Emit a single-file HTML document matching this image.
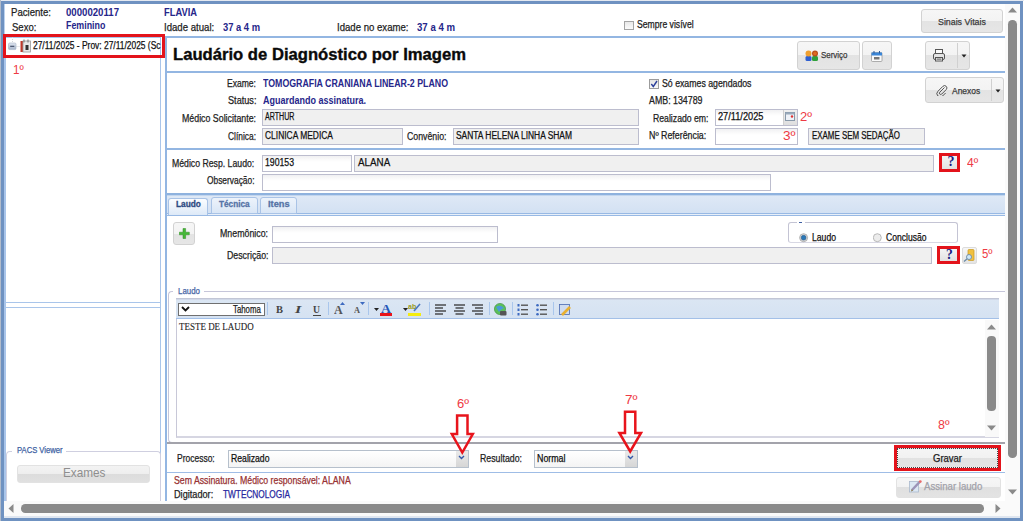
<!DOCTYPE html>
<html><head><meta charset="utf-8"><style>
html,body{margin:0;padding:0;width:1024px;height:521px;overflow:hidden;background:#ffffff;}
body>div{position:absolute;box-sizing:border-box;}
svg{position:absolute;}
</style></head><body>
<div style="left:0px;top:0px;width:1024px;height:1px;background:#e4e9f1"></div>
<div style="left:0px;top:0px;width:1px;height:521px;background:#b2bccb"></div>
<div style="left:1px;top:1px;width:1022px;height:3px;background:#6f92c1"></div>
<div style="left:1px;top:1px;width:3px;height:520px;background:#6f92c1"></div>
<div style="left:1020px;top:1px;width:3px;height:520px;background:#6f92c1"></div>
<div style="left:1px;top:518px;width:1022px;height:3px;background:#6f92c1"></div>
<div style="left:4px;top:516px;width:1016px;height:2px;background:#dfe6f0"></div>
<div style="left:4px;top:4px;width:1px;height:497px;background:#bcd2ee"></div>
<div style="left:11px;top:7px;font:11px 'Liberation Sans', sans-serif;line-height:11px;color:#1e1e1e;white-space:pre;transform:scaleX(0.8719);transform-origin:0 0;-webkit-text-stroke:0.25px currentColor;">Paciente:</div>
<div style="left:65.6px;top:7px;font:bold 10.5px 'Liberation Sans', sans-serif;line-height:10.5px;color:#26268a;white-space:pre;transform:scaleX(0.9165);transform-origin:0 0;">0000020117</div>
<div style="left:12px;top:22px;font:11px 'Liberation Sans', sans-serif;line-height:11px;color:#1e1e1e;white-space:pre;transform:scaleX(0.8671);transform-origin:0 0;-webkit-text-stroke:0.25px currentColor;">Sexo:</div>
<div style="left:65.6px;top:20px;font:bold 10.5px 'Liberation Sans', sans-serif;line-height:10.5px;color:#26268a;white-space:pre;transform:scaleX(0.8442);transform-origin:0 0;">Feminino</div>
<div style="left:164px;top:7px;font:bold 10.5px 'Liberation Sans', sans-serif;line-height:10.5px;color:#26268a;white-space:pre;transform:scaleX(0.8885);transform-origin:0 0;">FLAVIA</div>
<div style="left:164px;top:22px;font:11px 'Liberation Sans', sans-serif;line-height:11px;color:#1e1e1e;white-space:pre;transform:scaleX(0.8739);transform-origin:0 0;-webkit-text-stroke:0.25px currentColor;">Idade atual:</div>
<div style="left:223px;top:22px;font:bold 10.5px 'Liberation Sans', sans-serif;line-height:10.5px;color:#26268a;white-space:pre;transform:scaleX(0.8926);transform-origin:0 0;">37 a 4 m</div>
<div style="left:337px;top:22px;font:11px 'Liberation Sans', sans-serif;line-height:11px;color:#1e1e1e;white-space:pre;transform:scaleX(0.8724);transform-origin:0 0;-webkit-text-stroke:0.25px currentColor;">Idade no exame:</div>
<div style="left:416.5px;top:22px;font:bold 10.5px 'Liberation Sans', sans-serif;line-height:10.5px;color:#26268a;white-space:pre;transform:scaleX(0.9167);transform-origin:0 0;">37 a 4 m</div>
<div style="left:624px;top:21px;width:10px;height:9px;border:1px solid #a4a4a4;background:linear-gradient(#e8e8e8,#fbfbfb)"></div>
<div style="left:636.8px;top:20px;font:10px 'Liberation Sans', sans-serif;line-height:10px;color:#222;white-space:pre;transform:scaleX(0.8631);transform-origin:0 0;-webkit-text-stroke:0.25px currentColor;">Sempre visível</div>
<div style="left:921px;top:9px;width:82px;height:24px;background:linear-gradient(#f6f6f6 0,#f3f3f3 50%,#e3e3e3 50%,#e6e6e6 100%);border:1px solid #d2d2d2;border-radius:3px;"></div>
<div style="left:937.8px;top:17px;font:9.5px 'Liberation Sans', sans-serif;line-height:9.5px;color:#3a3a3a;white-space:pre;transform:scaleX(0.9287);transform-origin:0 0;-webkit-text-stroke:0.25px currentColor;">Sinais Vitais</div>
<div style="left:4px;top:37px;width:2px;height:464px;background:#a9c5ea"></div>
<div style="left:4px;top:37px;width:157px;height:1px;background:#a9c5ea"></div>
<div style="left:160px;top:37px;width:1px;height:464px;background:#a9c5ea"></div>
<svg style="left:8px;top:37px" width="14" height="14"><defs><linearGradient id="eg" x1="0" y1="0" x2="0" y2="1"><stop offset="0" stop-color="#e2e8f2"/><stop offset="1" stop-color="#a4b2c8"/></linearGradient></defs><line x1="4.5" y1="0" x2="4.5" y2="5.5" stroke="#d0d4da" stroke-dasharray="1,1"/><line x1="8.5" y1="9.5" x2="12" y2="9.5" stroke="#d0d4da" stroke-dasharray="1,1"/><rect x="0.5" y="6" width="7.5" height="6.6" rx="1.2" fill="url(#eg)" stroke="#a6b2c4" stroke-width="0.6"/><line x1="2.2" y1="9.3" x2="6.3" y2="9.3" stroke="#3a4660" stroke-width="1.1"/></svg>
<svg style="left:20px;top:39px" width="11" height="14"><rect x="0.5" y="2" width="3" height="11" fill="#c0392b"/><rect x="3" y="2" width="7.5" height="11" fill="#e8e8e8" stroke="#9a9a9a" stroke-width="0.8"/><rect x="3.5" y="0.5" width="1" height="3" fill="#777"/><rect x="7.5" y="0.5" width="1" height="3" fill="#777"/><rect x="5.5" y="6" width="3" height="5" fill="#333"/></svg>
<div style="left:32.5px;top:41px;font:10px 'Liberation Sans', sans-serif;line-height:10px;color:#111;white-space:pre;transform:scaleX(0.8421);transform-origin:0 0;-webkit-text-stroke:0.25px currentColor;">27/11/2025 - Prov: 27/11/2025 (Sc</div>
<div style="left:3px;top:34px;width:162px;height:24px;border:3px solid #e3131b"></div>
<div style="left:13px;top:64px;font:12px 'Liberation Sans', sans-serif;line-height:12px;color:#ee3a44;white-space:pre;transform:scaleX(0.9718);transform-origin:0 0;">1º</div>
<div style="left:5px;top:302px;width:156px;height:1px;background:#a9c5ea"></div>
<div style="left:5px;top:307px;width:156px;height:1px;background:#a9c5ea"></div>
<div style="left:6px;top:451px;width:155px;height:60px;border:1px solid #cfcfe0;border-radius:4px;border-bottom:none"></div>
<div style="left:12px;top:446px;width:54px;height:10px;background:#fff"></div>
<div style="left:16.9px;top:446px;font:9px 'Liberation Sans', sans-serif;line-height:9px;color:#3d5fa3;white-space:pre;transform:scaleX(0.8491);transform-origin:0 0;-webkit-text-stroke:0.25px currentColor;">PACS Viewer</div>
<div style="left:17px;top:465px;width:133px;height:18px;background:linear-gradient(#f3f3f3 0,#eeeeee 50%,#dcdcdc 50%,#e0e0e0 100%);border:1px solid #e2e2e2;border-radius:3px"></div>
<div style="left:62.5px;top:466px;font:13.5px 'Liberation Sans', sans-serif;line-height:13.5px;color:#8e8e8e;white-space:pre;transform:scaleX(0.8712);transform-origin:0 0;">Exames</div>
<div style="left:165px;top:36px;width:2px;height:465px;background:#93b6e2"></div>
<div style="left:165px;top:36px;width:840px;height:2px;background:#93b6e2"></div>
<div style="left:173px;top:46px;font:bold 17px 'Liberation Sans', sans-serif;line-height:17px;color:#0a0a0a;white-space:pre;transform:scaleX(0.9785);transform-origin:0 0;-webkit-text-stroke:0.35px currentColor;">Laudário de Diagnóstico por Imagem</div>
<div style="left:165px;top:71px;width:840px;height:2px;background:#93b6e2"></div>
<div style="left:797px;top:41px;width:63px;height:29px;background:linear-gradient(#f6f6f6 0,#f3f3f3 50%,#e3e3e3 50%,#e6e6e6 100%);border:1px solid #d2d2d2;border-radius:3px;"></div>
<svg style="left:805px;top:50px" width="14" height="12"><rect x="0.5" y="6" width="6" height="5" rx="1.5" fill="#2f5fd0"/><rect x="7" y="6" width="6" height="5" rx="1.5" fill="#2ea03a"/><circle cx="3.5" cy="3.5" r="3" fill="#f0a030"/><circle cx="10" cy="3.5" r="3" fill="#b8501c"/><circle cx="10" cy="3.5" r="1.8" fill="#e06a20"/></svg>
<div style="left:821px;top:49.5px;font:9.5px 'Liberation Sans', sans-serif;line-height:9.5px;color:#3a3a3a;white-space:pre;transform:scaleX(0.8363);transform-origin:0 0;-webkit-text-stroke:0.25px currentColor;">Serviço</div>
<div style="left:862px;top:41px;width:30px;height:29px;background:linear-gradient(#f6f6f6 0,#f3f3f3 50%,#e3e3e3 50%,#e6e6e6 100%);border:1px solid #d2d2d2;border-radius:3px;"></div>
<svg style="left:871px;top:51px" width="12" height="11"><rect x="0.5" y="1.5" width="10.5" height="9" rx="1" fill="#fafafa" stroke="#9a9a9a" stroke-width="0.8"/><rect x="0.5" y="1.5" width="10.5" height="3" fill="#3a86d8"/><rect x="2.5" y="0" width="1" height="2.5" fill="#2a5a9a"/><rect x="8" y="0" width="1" height="2.5" fill="#2a5a9a"/><rect x="3" y="6" width="5.5" height="2.5" fill="#777"/></svg>
<div style="left:925px;top:41px;width:45px;height:29px;background:linear-gradient(#f6f6f6 0,#f3f3f3 50%,#e3e3e3 50%,#e6e6e6 100%);border:1px solid #d2d2d2;border-radius:3px;"></div>
<div style="left:957px;top:43px;width:1px;height:25px;background:#d0d0d0"></div>
<svg style="left:933px;top:49px" width="12" height="13"><rect x="2.5" y="0.5" width="7" height="4" fill="#fafafa" stroke="#555"/><rect x="0.5" y="4.5" width="11" height="6" rx="1.5" fill="#e4e4e4" stroke="#555"/><rect x="2.5" y="8.5" width="7" height="3.5" fill="#fafafa" stroke="#555"/><rect x="3.5" y="9.5" width="5" height="1.2" fill="#666"/></svg>
<svg style="left:961px;top:54px" width="6" height="4"><polygon points="0.5,0.5 5.5,0.5 3,3.5" fill="#222"/></svg>
<div style="left:925px;top:77px;width:79px;height:26px;background:linear-gradient(#f6f6f6 0,#f3f3f3 50%,#e3e3e3 50%,#e6e6e6 100%);border:1px solid #d2d2d2;border-radius:3px;"></div>
<div style="left:991px;top:79px;width:1px;height:22px;background:#d0d0d0"></div>
<svg style="left:936px;top:85px" width="12" height="11"><path d="M8.5,2.5 L3.8,7.2 a1.3,1.3 0 0 0 1.9,1.9 L10.2,4.6 a2.3,2.3 0 0 0 -3.3,-3.3 L1.9,6.3 a3.3,3.3 0 0 0 4.7,4.7 L9.6,8" fill="none" stroke="#555" stroke-width="1"/></svg>
<div style="left:951.6px;top:85.5px;font:9.5px 'Liberation Sans', sans-serif;line-height:9.5px;color:#3a3a3a;white-space:pre;transform:scaleX(0.8899);transform-origin:0 0;-webkit-text-stroke:0.25px currentColor;">Anexos</div>
<svg style="left:995px;top:89px" width="6" height="4"><polygon points="0.5,0.5 5.5,0.5 3,3.5" fill="#222"/></svg>
<div style="left:227px;top:79px;font:10px 'Liberation Sans', sans-serif;line-height:10px;color:#1e1e1e;white-space:pre;transform:scaleX(0.8553);transform-origin:0 0;-webkit-text-stroke:0.25px currentColor;">Exame:</div>
<div style="left:262.7px;top:79px;font:bold 10px 'Liberation Sans', sans-serif;line-height:10px;color:#26268a;white-space:pre;transform:scaleX(0.8802);transform-origin:0 0;">TOMOGRAFIA CRANIANA LINEAR-2 PLANO</div>
<div style="left:227.5px;top:96px;font:10px 'Liberation Sans', sans-serif;line-height:10px;color:#1e1e1e;white-space:pre;transform:scaleX(0.9152);transform-origin:0 0;-webkit-text-stroke:0.25px currentColor;">Status:</div>
<div style="left:262.7px;top:96px;font:bold 10px 'Liberation Sans', sans-serif;line-height:10px;color:#26268a;white-space:pre;transform:scaleX(0.8998);transform-origin:0 0;">Aguardando assinatura.</div>
<div style="left:182.1px;top:114px;font:10px 'Liberation Sans', sans-serif;line-height:10px;color:#1e1e1e;white-space:pre;transform:scaleX(0.8816);transform-origin:0 0;-webkit-text-stroke:0.25px currentColor;">Médico Solicitante:</div>
<div style="left:262px;top:109px;width:377px;height:17px;background:#f0f0f0;border:1px solid #bcbdce"></div>
<div style="left:265.3px;top:112px;font:10px 'Liberation Sans', sans-serif;line-height:10px;color:#111;white-space:pre;transform:scaleX(0.7111);transform-origin:0 0;-webkit-text-stroke:0.25px currentColor;">ARTHUR</div>
<div style="left:228px;top:132px;font:10px 'Liberation Sans', sans-serif;line-height:10px;color:#1e1e1e;white-space:pre;transform:scaleX(0.8393);transform-origin:0 0;-webkit-text-stroke:0.25px currentColor;">Clínica:</div>
<div style="left:262px;top:128px;width:141px;height:17px;background:#f0f0f0;border:1px solid #bcbdce"></div>
<div style="left:265.3px;top:131px;font:10px 'Liberation Sans', sans-serif;line-height:10px;color:#111;white-space:pre;transform:scaleX(0.8439);transform-origin:0 0;-webkit-text-stroke:0.25px currentColor;">CLINICA MEDICA</div>
<div style="left:407px;top:132px;font:10px 'Liberation Sans', sans-serif;line-height:10px;color:#1e1e1e;white-space:pre;transform:scaleX(0.8772);transform-origin:0 0;-webkit-text-stroke:0.25px currentColor;">Convênio:</div>
<div style="left:453px;top:128px;width:186px;height:17px;background:#f0f0f0;border:1px solid #bcbdce"></div>
<div style="left:456px;top:131px;font:10px 'Liberation Sans', sans-serif;line-height:10px;color:#111;white-space:pre;transform:scaleX(0.8428);transform-origin:0 0;-webkit-text-stroke:0.25px currentColor;">SANTA HELENA LINHA SHAM</div>
<div style="left:649px;top:79px;width:10px;height:10px;border:1px solid #9c9c9c;background:linear-gradient(#e4e4e4,#f8f8f8)"></div>
<svg style="left:650px;top:80px" width="8" height="8"><polyline points="1.3,4 3.3,6.5 7,1" fill="none" stroke="#2b3f9a" stroke-width="1.4"/></svg>
<div style="left:662px;top:79px;font:10px 'Liberation Sans', sans-serif;line-height:10px;color:#222;white-space:pre;transform:scaleX(0.8749);transform-origin:0 0;-webkit-text-stroke:0.25px currentColor;">Só exames agendados</div>
<div style="left:649px;top:96px;font:10px 'Liberation Sans', sans-serif;line-height:10px;color:#222;white-space:pre;transform:scaleX(0.8827);transform-origin:0 0;-webkit-text-stroke:0.25px currentColor;">AMB: 134789</div>
<div style="left:652.5px;top:114px;font:10px 'Liberation Sans', sans-serif;line-height:10px;color:#222;white-space:pre;transform:scaleX(0.8682);transform-origin:0 0;-webkit-text-stroke:0.25px currentColor;">Realizado em:</div>
<div style="left:715px;top:109px;width:83px;height:17px;background:linear-gradient(#f0f0f2,#fbfbfb 4px,#fff 6px);border:1px solid #bcbdce"></div>
<div style="left:783px;top:110px;width:14px;height:15px;background:linear-gradient(#f0f0f0,#dedede);border-left:1px solid #d0d0d0"></div>
<svg style="left:785px;top:112px" width="10" height="10"><rect x="0.5" y="0.5" width="9" height="8" fill="#eef2f8" stroke="#8899aa"/><rect x="0.5" y="0.5" width="9" height="2" fill="#9ab"/><circle cx="7" cy="4.5" r="1.2" fill="#d33"/></svg>
<div style="left:718px;top:112px;font:10px 'Liberation Sans', sans-serif;line-height:10px;color:#111;white-space:pre;transform:scaleX(0.9207);transform-origin:0 0;-webkit-text-stroke:0.25px currentColor;">27/11/2025</div>
<div style="left:800px;top:111px;font:12px 'Liberation Sans', sans-serif;line-height:12px;color:#ee3a44;white-space:pre;transform:scaleX(1.0847);transform-origin:0 0;">2º</div>
<div style="left:648.75px;top:131px;font:10px 'Liberation Sans', sans-serif;line-height:10px;color:#222;white-space:pre;transform:scaleX(0.8835);transform-origin:0 0;-webkit-text-stroke:0.25px currentColor;">Nº Referência:</div>
<div style="left:715px;top:128px;width:83px;height:17px;background:linear-gradient(#f0f0f2,#fbfbfb 4px,#fff 6px);border:1px solid #bcbdce"></div>
<div style="left:782.5px;top:130px;font:12px 'Liberation Sans', sans-serif;line-height:12px;color:#ee3a44;white-space:pre;transform:scaleX(1.1299);transform-origin:0 0;">3º</div>
<div style="left:808px;top:128px;width:117px;height:17px;background:#f0f0f0;border:1px solid #bcbdce"></div>
<div style="left:811.5px;top:131px;font:10px 'Liberation Sans', sans-serif;line-height:10px;color:#111;white-space:pre;transform:scaleX(0.7918);transform-origin:0 0;-webkit-text-stroke:0.25px currentColor;">EXAME SEM SEDAÇÃO</div>
<div style="left:165px;top:148px;width:840px;height:2px;background:#93b6e2"></div>
<div style="left:171.75px;top:159px;font:10px 'Liberation Sans', sans-serif;line-height:10px;color:#1e1e1e;white-space:pre;transform:scaleX(0.8702);transform-origin:0 0;-webkit-text-stroke:0.25px currentColor;">Médico Resp. Laudo:</div>
<div style="left:262px;top:155px;width:90px;height:17px;background:linear-gradient(#f0f0f2,#fbfbfb 4px,#fff 6px);border:1px solid #bcbdce"></div>
<div style="left:265.3px;top:158px;font:10px 'Liberation Sans', sans-serif;line-height:10px;color:#111;white-space:pre;transform:scaleX(0.8689);transform-origin:0 0;-webkit-text-stroke:0.25px currentColor;">190153</div>
<div style="left:354px;top:155px;width:580px;height:17px;background:#f0f0f0;border:1px solid #bcbdce"></div>
<div style="left:357.8px;top:157px;font:11px 'Liberation Sans', sans-serif;line-height:11px;color:#111;white-space:pre;transform:scaleX(0.8925);transform-origin:0 0;-webkit-text-stroke:0.25px currentColor;">ALANA</div>
<div style="left:939px;top:153px;width:21px;height:19px;border:3px solid #e3131b;background:linear-gradient(#f4f4f4,#e2e2e2)"></div>
<div style="left:947.4px;top:155px;font:bold 14px 'Liberation Serif', serif;line-height:14px;color:#1a1a80;white-space:pre;transform:scaleX(1.0000);transform-origin:0 0;">?</div>
<div style="left:966.6px;top:157px;font:12px 'Liberation Sans', sans-serif;line-height:12px;color:#ee3a44;white-space:pre;transform:scaleX(1.0124);transform-origin:0 0;">4º</div>
<div style="left:206.75px;top:176px;font:10px 'Liberation Sans', sans-serif;line-height:10px;color:#1e1e1e;white-space:pre;transform:scaleX(0.8377);transform-origin:0 0;-webkit-text-stroke:0.25px currentColor;">Observação:</div>
<div style="left:262px;top:174px;width:509px;height:17px;background:linear-gradient(#f0f0f2,#fbfbfb 4px,#fff 6px);border:1px solid #bcbdce"></div>
<div style="left:167px;top:193px;width:838px;height:2px;background:#8eb2de"></div>
<div style="left:167px;top:195px;width:838px;height:18px;background:linear-gradient(#dfe9f6,#d3e1f3)"></div>
<div style="left:167px;top:195px;width:838px;height:1px;background:#c2d6ef"></div>
<div style="left:167px;top:213px;width:838px;height:1px;background:#98b9e4"></div>
<div style="left:167px;top:214px;width:838px;height:1px;background:#e8f0fa"></div>
<div style="left:167px;top:215px;width:838px;height:1px;background:#98b9e4"></div>
<div style="left:168px;top:198px;width:40px;height:17px;background:linear-gradient(#fbfdff,#dde9f7);border:1px solid #a9c3e6;border-bottom:none;border-radius:3px 3px 0 0"></div>
<div style="left:211px;top:197px;width:47px;height:17px;background:linear-gradient(#edf3fb,#d9e6f6);border:1px solid #a9c3e6;border-radius:3px 3px 0 0"></div>
<div style="left:260px;top:197px;width:37px;height:17px;background:linear-gradient(#edf3fb,#d9e6f6);border:1px solid #a9c3e6;border-radius:3px 3px 0 0"></div>
<div style="left:176.2px;top:200px;font:bold 9px 'Liberation Sans', sans-serif;line-height:9px;color:#2c4a82;white-space:pre;transform:scaleX(0.9222);transform-origin:0 0;-webkit-text-stroke:0.3px currentColor;">Laudo</div>
<div style="left:219.3px;top:200px;font:bold 9px 'Liberation Sans', sans-serif;line-height:9px;color:#5573a6;white-space:pre;transform:scaleX(0.9156);transform-origin:0 0;-webkit-text-stroke:0.3px currentColor;">Técnica</div>
<div style="left:268px;top:200px;font:bold 9px 'Liberation Sans', sans-serif;line-height:9px;color:#5573a6;white-space:pre;transform:scaleX(1.0278);transform-origin:0 0;-webkit-text-stroke:0.3px currentColor;">Itens</div>
<div style="left:173px;top:222px;width:22px;height:23px;background:linear-gradient(#f6f6f6 0,#f3f3f3 50%,#e3e3e3 50%,#e6e6e6 100%);border:1px solid #d2d2d2;border-radius:3px;"></div>
<svg style="left:179px;top:228px" width="11" height="11"><path d="M4,0.5 h2.6 v3.7 h3.7 v2.6 h-3.7 v3.7 h-2.6 v-3.7 h-3.7 v-2.6 h3.7 z" fill="#46b838" stroke="#2f8a22" stroke-width="0.5"/></svg>
<div style="left:220px;top:229px;font:10px 'Liberation Sans', sans-serif;line-height:10px;color:#1e1e1e;white-space:pre;transform:scaleX(0.8812);transform-origin:0 0;-webkit-text-stroke:0.25px currentColor;">Mnemônico:</div>
<div style="left:272px;top:226px;width:226px;height:17px;background:linear-gradient(#f0f0f2,#fbfbfb 4px,#fff 6px);border:1px solid #bcbdce"></div>
<div style="left:226.75px;top:251px;font:10px 'Liberation Sans', sans-serif;line-height:10px;color:#1e1e1e;white-space:pre;transform:scaleX(0.8783);transform-origin:0 0;-webkit-text-stroke:0.25px currentColor;">Descrição:</div>
<div style="left:272px;top:247px;width:660px;height:17px;background:#f0f0f0;border:1px solid #bcbdce"></div>
<div style="left:788px;top:222px;width:170px;height:21px;border:1px solid #c4c4d4;border-radius:3px;border-bottom-color:#d8d8e4"></div>
<div style="left:797px;top:220px;width:8px;height:4px;background:#fff"></div>
<div style="left:799px;top:222px;width:3px;height:1px;background:#3d5fa3"></div>
<svg style="left:799px;top:233px" width="10" height="10"><circle cx="4.6" cy="4.7" r="4" fill="#dcdcdc" stroke="#9a9a9a" stroke-width="0.7"/><circle cx="4.6" cy="4.7" r="2.4" fill="#2a78b8" stroke="#1a4a78" stroke-width="0.5"/></svg>
<div style="left:812px;top:233px;font:10px 'Liberation Sans', sans-serif;line-height:10px;color:#111;white-space:pre;transform:scaleX(0.8629);transform-origin:0 0;-webkit-text-stroke:0.25px currentColor;">Laudo</div>
<svg style="left:873px;top:233px" width="10" height="10"><circle cx="4.3" cy="4.7" r="4" fill="#ececec" stroke="#a0a0a0" stroke-width="0.7"/></svg>
<div style="left:885.5px;top:233px;font:10px 'Liberation Sans', sans-serif;line-height:10px;color:#111;white-space:pre;transform:scaleX(0.8569);transform-origin:0 0;-webkit-text-stroke:0.25px currentColor;">Conclusão</div>
<div style="left:937px;top:246px;width:23px;height:18px;border:3px solid #e3131b;background:linear-gradient(#f4f4f4,#e2e2e2)"></div>
<div style="left:945.6px;top:248px;font:bold 14px 'Liberation Serif', serif;line-height:14px;color:#1a1a80;white-space:pre;transform:scaleX(0.9714);transform-origin:0 0;">?</div>
<div style="left:962px;top:247px;width:15px;height:17px;background:linear-gradient(#f6f6f6,#e4e4e4);border:1px solid #dcdcdc;border-radius:2px"></div>
<svg style="left:963px;top:249px" width="13" height="13"><rect x="5" y="0.5" width="6" height="11" rx="1" fill="#f0c040" stroke="#c89a20" stroke-width="0.7"/><circle cx="6" cy="8" r="2.5" fill="#cfe8f8" stroke="#6a8aa8" stroke-width="0.9"/><line x1="4.2" y1="9.8" x2="1" y2="12.5" stroke="#6a8aa8" stroke-width="1.3"/></svg>
<div style="left:982px;top:248px;font:12px 'Liberation Sans', sans-serif;line-height:12px;color:#ee3a44;white-space:pre;transform:scaleX(0.9492);transform-origin:0 0;">5º</div>
<div style="left:168px;top:291px;width:837px;height:152px;border:1px solid #c6c6da;border-right:none;border-radius:4px 0 0 4px"></div>
<div style="left:173px;top:286px;width:31px;height:9px;background:#fff"></div>
<div style="left:177.8px;top:287px;font:9px 'Liberation Sans', sans-serif;line-height:9px;color:#4866a6;white-space:pre;transform:scaleX(0.8789);transform-origin:0 0;-webkit-text-stroke:0.25px currentColor;">Laudo</div>
<div style="left:176px;top:298px;width:823px;height:21px;background:linear-gradient(#dbe6f3,#d5e2f2);border-top:1px solid #c2c6d6;border-bottom:1px solid #a3c0e8"></div>
<div style="left:176px;top:299px;width:823px;height:1px;background:#d0d8e8"></div>
<div style="left:178px;top:303px;width:87px;height:13px;background:#fff;border:1px solid #707070"></div>
<svg style="left:181px;top:306px" width="9" height="6"><polyline points="1,1 4.5,4.5 8,1" fill="none" stroke="#111" stroke-width="1.8"/></svg>
<div style="left:233px;top:305px;font:10px 'Liberation Sans', sans-serif;line-height:10px;color:#222;white-space:pre;transform:scaleX(0.7814);transform-origin:0 0;-webkit-text-stroke:0.25px currentColor;">Tahoma</div>
<div style="left:267px;top:302px;width:1px;height:13px;background:#a9c6ec"></div>
<div style="left:328px;top:302px;width:1px;height:13px;background:#a9c6ec"></div>
<div style="left:368px;top:302px;width:1px;height:13px;background:#a9c6ec"></div>
<div style="left:429px;top:302px;width:1px;height:13px;background:#a9c6ec"></div>
<div style="left:489px;top:302px;width:1px;height:13px;background:#a9c6ec"></div>
<div style="left:512px;top:302px;width:1px;height:13px;background:#a9c6ec"></div>
<div style="left:553px;top:302px;width:1px;height:13px;background:#a9c6ec"></div>
<div style="left:275.8px;top:305.4px;font:bold 10px 'Liberation Serif', serif;line-height:10px;color:#444;white-space:pre;transform:scaleX(1.0492);transform-origin:0 0;">B</div>
<div style="left:294.5px;top:305.4px;font:italic bold 10px 'Liberation Serif', serif;line-height:10px;color:#444;white-space:pre;transform:scaleX(1.6128);transform-origin:0 0;">I</div>
<div style="left:313.3px;top:305.4px;font:bold 10px 'Liberation Serif', serif;line-height:10px;color:#444;white-space:pre;transform:scaleX(0.9676);transform-origin:0 0;">U</div>
<div style="left:313px;top:315px;width:8px;height:1px;background:#444"></div>
<div style="left:334px;top:304.3px;font:bold 12px 'Liberation Serif', serif;line-height:12px;color:#555;white-space:pre;transform:scaleX(1.0032);transform-origin:0 0;">A</div>
<svg style="left:340px;top:302px" width="5" height="3"><polygon points="0,3 2.5,0 5,3" fill="#3d6ac0"/></svg>
<div style="left:354.4px;top:306.3px;font:bold 9px 'Liberation Serif', serif;line-height:9px;color:#555;white-space:pre;transform:scaleX(0.9231);transform-origin:0 0;">A</div>
<svg style="left:360px;top:302px" width="5" height="3"><polygon points="0,0 2.5,3 5,0" fill="#3d6ac0"/></svg>
<svg style="left:374px;top:308px" width="5" height="3"><polygon points="0,0 5,0 2.5,3" fill="#222"/></svg>
<div style="left:381px;top:302.5px;font:bold 12px 'Liberation Serif', serif;line-height:12px;color:#2656b8;white-space:pre;transform:scaleX(1.1532);transform-origin:0 0;">A</div>
<div style="left:380px;top:313px;width:12px;height:3px;background:#e8141c"></div>
<svg style="left:403px;top:308px" width="5" height="3"><polygon points="0,0 5,0 2.5,3" fill="#222"/></svg>
<svg style="left:408px;top:302px" width="13" height="11"><text x="0" y="7" font-size="7" font-weight="bold" fill="#9a9a20" font-family="Liberation Sans">ab</text><line x1="6" y1="9" x2="12" y2="2" stroke="#4a78c0" stroke-width="1.6"/></svg>
<div style="left:408px;top:313px;width:13px;height:3px;background:#f4ec10"></div>
<svg style="left:435px;top:304px" width="11" height="11"><line x1="0" y1="1" x2="11" y2="1" stroke="#333" stroke-width="1.3"/><line x1="0" y1="4" x2="8" y2="4" stroke="#333" stroke-width="1.3"/><line x1="0" y1="7" x2="11" y2="7" stroke="#333" stroke-width="1.3"/><line x1="0" y1="10" x2="8" y2="10" stroke="#333" stroke-width="1.3"/></svg>
<svg style="left:454px;top:304px" width="11" height="11"><line x1="0.0" y1="1" x2="11.0" y2="1" stroke="#333" stroke-width="1.3"/><line x1="1.5" y1="4" x2="9.5" y2="4" stroke="#333" stroke-width="1.3"/><line x1="0.0" y1="7" x2="11.0" y2="7" stroke="#333" stroke-width="1.3"/><line x1="1.5" y1="10" x2="9.5" y2="10" stroke="#333" stroke-width="1.3"/></svg>
<svg style="left:472px;top:304px" width="11" height="11"><line x1="0" y1="1" x2="11" y2="1" stroke="#333" stroke-width="1.3"/><line x1="3" y1="4" x2="11" y2="4" stroke="#333" stroke-width="1.3"/><line x1="0" y1="7" x2="11" y2="7" stroke="#333" stroke-width="1.3"/><line x1="3" y1="10" x2="11" y2="10" stroke="#333" stroke-width="1.3"/></svg>
<svg style="left:494px;top:303px" width="13" height="13"><circle cx="6" cy="6" r="5.6" fill="#5cc05a" stroke="#3a8a3a" stroke-width="0.6"/><path d="M2,4 Q6,1 10,5 Q7,6 5,9 Z" fill="#4a9ad8"/><rect x="6" y="8" width="6.5" height="4.5" rx="1" fill="#555"/></svg>
<svg style="left:517px;top:304px" width="12" height="12"><g fill="#3d6ac0"><rect x="0.5" y="0" width="2" height="2.5"/><rect x="0.5" y="4.5" width="2" height="2.5"/><rect x="0.5" y="9" width="2" height="2.5"/></g><g stroke="#555" stroke-width="1.4"><line x1="4" y1="1.2" x2="11" y2="1.2"/><line x1="4" y1="5.7" x2="11" y2="5.7"/><line x1="4" y1="10.2" x2="11" y2="10.2"/></g></svg>
<svg style="left:536px;top:304px" width="12" height="12"><g fill="#3d6ac0"><circle cx="1.5" cy="1.3" r="1.3"/><circle cx="1.5" cy="5.8" r="1.3"/><circle cx="1.5" cy="10.3" r="1.3"/></g><g stroke="#555" stroke-width="1.4"><line x1="4" y1="1.2" x2="11" y2="1.2"/><line x1="4" y1="5.7" x2="11" y2="5.7"/><line x1="4" y1="10.2" x2="11" y2="10.2"/></g></svg>
<svg style="left:559px;top:304px" width="12" height="12"><rect x="0.5" y="0.5" width="10" height="10" fill="#cfdcf0" stroke="#4a6ab0" stroke-width="0.8"/><line x1="3" y1="11" x2="11" y2="3" stroke="#e8b030" stroke-width="2.6"/></svg>
<div style="left:176px;top:319px;width:823px;height:119px;border-left:1px solid #c8c8d8;border-bottom:2px solid #d6d6e2;background:#fff"></div>
<div style="left:179.3px;top:322px;font:10px 'Liberation Serif', serif;line-height:10px;color:#222;white-space:pre;transform:scaleX(0.8965);transform-origin:0 0;-webkit-text-stroke:0.1px currentColor;">TESTE DE LAUDO</div>
<div style="left:985px;top:320px;width:14px;height:117px;background:#f9f9f9"></div>
<svg style="left:987px;top:324px" width="9" height="6"><polygon points="0,5.5 4.5,0.5 9,5.5" fill="#8a8a8a"/></svg>
<div style="left:987.4px;top:336px;width:8.2px;height:75px;background:#8a8a8a;border-radius:4.1px"></div>
<svg style="left:987px;top:425px" width="9" height="6"><polygon points="0,0.5 4.5,5.5 9,0.5" fill="#8a8a8a"/></svg>
<div style="left:937.5px;top:419px;font:12px 'Liberation Sans', sans-serif;line-height:12px;color:#ee3a44;white-space:pre;transform:scaleX(1.0395);transform-origin:0 0;">8º</div>
<div style="left:167px;top:442px;width:838px;height:2px;background:#a3a3ab"></div>
<div style="left:177px;top:454px;font:10px 'Liberation Sans', sans-serif;line-height:10px;color:#1e1e1e;white-space:pre;transform:scaleX(0.8478);transform-origin:0 0;-webkit-text-stroke:0.25px currentColor;">Processo:</div>
<div style="left:228px;top:450px;width:241px;height:18px;background:linear-gradient(#ffffff,#f4f4f4);border:1px solid #b6c0cc"></div>
<div style="left:456px;top:451px;width:12px;height:16px;background:linear-gradient(#eaeaea,#d6d6d6)"></div>
<svg style="left:458px;top:455px" width="7" height="5"><polyline points="1,1 3.5,3.5 6,1" fill="none" stroke="#3357a8" stroke-width="1.4"/></svg>
<div style="left:231.2px;top:454px;font:10px 'Liberation Sans', sans-serif;line-height:10px;color:#111;white-space:pre;transform:scaleX(0.8655);transform-origin:0 0;-webkit-text-stroke:0.25px currentColor;">Realizado</div>
<div style="left:480.25px;top:454px;font:10px 'Liberation Sans', sans-serif;line-height:10px;color:#1e1e1e;white-space:pre;transform:scaleX(0.8784);transform-origin:0 0;-webkit-text-stroke:0.25px currentColor;">Resultado:</div>
<div style="left:534px;top:450px;width:104px;height:18px;background:linear-gradient(#ffffff,#f4f4f4);border:1px solid #b6c0cc"></div>
<div style="left:625px;top:451px;width:12px;height:16px;background:linear-gradient(#eaeaea,#d6d6d6)"></div>
<svg style="left:627px;top:455px" width="7" height="5"><polyline points="1,1 3.5,3.5 6,1" fill="none" stroke="#3357a8" stroke-width="1.4"/></svg>
<div style="left:537px;top:454px;font:10px 'Liberation Sans', sans-serif;line-height:10px;color:#111;white-space:pre;transform:scaleX(0.8841);transform-origin:0 0;-webkit-text-stroke:0.25px currentColor;">Normal</div>
<svg style="left:448px;top:412px" width="30" height="44"><path d="M9.1,3.5 H19.5 V22 H24.8 L14.3,40.5 L3.8,22 H9.1 Z" fill="none" stroke="#e8141c" stroke-width="2.5" stroke-linejoin="miter"/></svg>
<div style="left:456.5px;top:398px;font:12px 'Liberation Sans', sans-serif;line-height:12px;color:#ee3a44;white-space:pre;transform:scaleX(1.0847);transform-origin:0 0;">6º</div>
<svg style="left:616px;top:408px" width="30" height="48"><path d="M9,3.7 H19.3 V25 H25 L14.2,43.5 L3.4,25 H9 Z" fill="none" stroke="#e8141c" stroke-width="2.5" stroke-linejoin="miter"/></svg>
<div style="left:625px;top:394px;font:12px 'Liberation Sans', sans-serif;line-height:12px;color:#ee3a44;white-space:pre;transform:scaleX(1.1299);transform-origin:0 0;">7º</div>
<div style="left:894px;top:445px;width:107px;height:26px;border:3px solid #e3131b;background:#fff"></div>
<div style="left:897px;top:448px;width:101px;height:20px;background:linear-gradient(#f5f5f5 0,#f1f1f1 50%,#e2e2e2 50%,#e4e4e4 100%);border:1px dotted #444"></div>
<div style="left:932.5px;top:454px;font:10px 'Liberation Sans', sans-serif;line-height:10px;color:#222;white-space:pre;transform:scaleX(0.9489);transform-origin:0 0;-webkit-text-stroke:0.25px currentColor;">Gravar</div>
<div style="left:167px;top:472px;width:838px;height:1px;background:#9fbde6"></div>
<div style="left:173.75px;top:476px;font:10px 'Liberation Sans', sans-serif;line-height:10px;color:#983232;white-space:pre;transform:scaleX(0.8736);transform-origin:0 0;-webkit-text-stroke:0.25px currentColor;">Sem Assinatura. Médico responsável: ALANA</div>
<div style="left:174px;top:490px;font:10px 'Liberation Sans', sans-serif;line-height:10px;color:#1e1e1e;white-space:pre;transform:scaleX(0.9156);transform-origin:0 0;-webkit-text-stroke:0.25px currentColor;">Digitador:</div>
<div style="left:223.3px;top:490px;font:10px 'Liberation Sans', sans-serif;line-height:10px;color:#2727a0;white-space:pre;transform:scaleX(0.8259);transform-origin:0 0;-webkit-text-stroke:0.25px currentColor;">TWTECNOLOGIA</div>
<div style="left:896px;top:477px;width:105px;height:21px;background:linear-gradient(#f6f6f6 0,#f2f2f2 50%,#e0e0e0 50%,#e3e3e3 100%);border:1px solid #e2e2e2;border-radius:3px"></div>
<svg style="left:909px;top:480px" width="14" height="13"><rect x="0.5" y="1.5" width="9" height="10.5" fill="#dde8f4" stroke="#aab8cc" stroke-width="0.8"/><line x1="3" y1="10" x2="10.5" y2="2.2" stroke="#9c94b8" stroke-width="2.4"/><circle cx="11.3" cy="1.6" r="1.4" fill="#e86a6a"/><path d="M2,11.5 L2.6,9 L4.2,10.6 Z" fill="#8a7a50"/></svg>
<div style="left:924.4px;top:482px;font:10px 'Liberation Sans', sans-serif;line-height:10px;color:#a2a2aa;white-space:pre;transform:scaleX(0.9621);transform-origin:0 0;-webkit-text-stroke:0.25px currentColor;">Assinar laudo</div>
<div style="left:1005px;top:4px;width:15px;height:497px;background:#fafafa"></div>
<svg style="left:1008px;top:7px" width="9" height="6"><polygon points="0,5.5 4.5,0.5 9,5.5" fill="#8a8a8a"/></svg>
<div style="left:1008px;top:20px;width:8.5px;height:438px;background:#8a8a8a;border-radius:4.25px"></div>
<svg style="left:1008px;top:489px" width="9" height="6"><polygon points="0,0.5 4.5,5.5 9,0.5" fill="#8a8a8a"/></svg>
<div style="left:4px;top:501px;width:1016px;height:15px;background:#fafafa"></div>
<svg style="left:8px;top:504px" width="6" height="9"><polygon points="5.5,0 0.5,4.5 5.5,9" fill="#8a8a8a"/></svg>
<div style="left:21px;top:504px;width:963px;height:8.5px;background:#8a8a8a;border-radius:4.25px"></div>
<svg style="left:995px;top:504px" width="6" height="9"><polygon points="0.5,0 5.5,4.5 0.5,9" fill="#8a8a8a"/></svg>
</body></html>
